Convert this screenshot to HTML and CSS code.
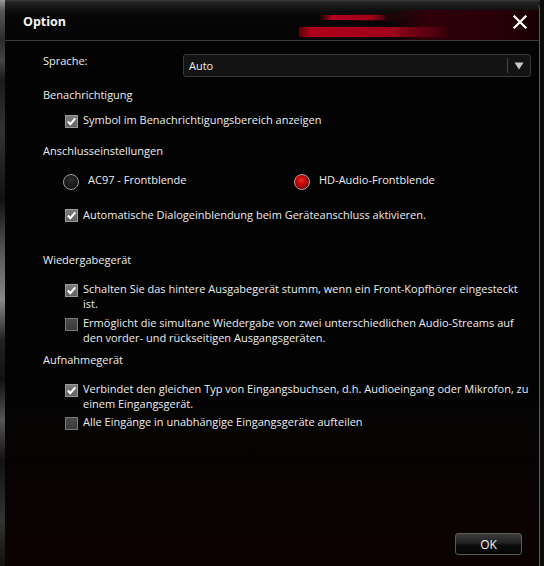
FILE: index.html
```html
<!DOCTYPE html>
<html lang="de">
<head>
<meta charset="utf-8">
<title>Option</title>
<link rel="stylesheet" href="styles.css">
</head>
<body>
<div class="screen">
  <div class="backwin"></div>
  <div class="dialog">
    <div class="titlebar">
      <span class="title">Option</span>
      <span class="close"><svg width="14" height="14" viewBox="0 0 14 14"><path d="M1.5 1.5 L12.5 12.5 M12.5 1.5 L1.5 12.5" stroke="#fff" stroke-width="2.2" stroke-linecap="square"/></svg></span>
    </div>
    <div class="content">
      <div class="row-lang">
        <span class="lang-label">Sprache:</span>
        <div class="select">
          <span class="select-value">Auto</span>
          <span class="select-btn"><svg width="10" height="8" viewBox="0 0 10 8"><path d="M0.5 0.5 H9.5 L5 7.5 Z" fill="#c8c8c8"/></svg></span>
        </div>
      </div>
      <div class="heading h1">Benachrichtigung</div>
      <div class="opt o1"><span class="cb on"><svg width="11" height="11" viewBox="0 0 11 11"><path d="M1.8 5.6 L4.3 8.2 L9.3 2.4" fill="none" stroke="#fff" stroke-width="2.1"/></svg></span><span class="txt">Symbol im Benachrichtigungsbereich anzeigen</span></div>
      <div class="heading h2">Anschlusseinstellungen</div>
      <div class="radios">
        <div class="radio-item first"><span class="rb"></span><span class="txt">AC97 - Frontblende</span></div>
        <div class="radio-item"><span class="rb on"></span><span class="txt">HD-Audio-Frontblende</span></div>
      </div>
      <div class="opt o2"><span class="cb on"><svg width="11" height="11" viewBox="0 0 11 11"><path d="M1.8 5.6 L4.3 8.2 L9.3 2.4" fill="none" stroke="#fff" stroke-width="2.1"/></svg></span><span class="txt">Automatische Dialogeinblendung beim Geräteanschluss aktivieren.</span></div>
      <div class="heading h3">Wiedergabegerät</div>
      <div class="opt o3"><span class="cb on"><svg width="11" height="11" viewBox="0 0 11 11"><path d="M1.8 5.6 L4.3 8.2 L9.3 2.4" fill="none" stroke="#fff" stroke-width="2.1"/></svg></span><span class="txt">Schalten Sie das hintere Ausgabegerät stumm, wenn ein Front-Kopfhörer eingesteckt<br>ist.</span></div>
      <div class="opt o4"><span class="cb"></span><span class="txt">Ermöglicht die simultane Wiedergabe von zwei unterschiedlichen Audio-Streams auf<br>den vorder- und rückseitigen Ausgangsgeräten.</span></div>
      <div class="heading h4">Aufnahmegerät</div>
      <div class="opt o5"><span class="cb on"><svg width="11" height="11" viewBox="0 0 11 11"><path d="M1.8 5.6 L4.3 8.2 L9.3 2.4" fill="none" stroke="#fff" stroke-width="2.1"/></svg></span><span class="txt">Verbindet den gleichen Typ von Eingangsbuchsen, d.h. Audioeingang oder Mikrofon, zu<br>einem Eingangsgerät.</span></div>
      <div class="opt o6"><span class="cb"></span><span class="txt">Alle Eingänge in unabhängige Eingangsgeräte aufteilen</span></div>
    </div>
    <div class="footer">
      <button class="ok">OK</button>
    </div>
  </div>
  <div class="rightedge"></div>
</div>
</body>
</html>
```
FILE: styles.css
```css
html, body {
  margin: 0;
  padding: 0;
}
body {
  width: 544px;
  height: 566px;
  overflow: hidden;
  background: #1c1c1c;
  font-family: "Open Sans", "Noto Sans", sans-serif;
  font-size: 11px;
  color: #ececec;
}
.screen {
  display: flex;
  height: 566px;
  background: linear-gradient(180deg, #3a3a3a 0, #1a1a1a 3px, #111 100%);
}
.backwin {
  width: 5px;
  flex: none;
  background: linear-gradient(180deg, #9a9a9a 0, #5a5a5a 10px, #2a2a2a 40px, #444 60px, #1a1a1a 80px, #333 130px, #111 200px, #555 250px, #888 300px, #222 340px, #111 380px, #555 420px, #111 460px, #333 520px, #111 566px);
}
.dialog {
  width: 534px;
  flex: none;
  margin-top: 3px;
  height: 563px;
  border-right: 1px solid #5c5c5c;
  border-top-right-radius: 6px;
  background: linear-gradient(180deg, #030303 0%, #040303 70%, #0d0202 100%);
  display: flex;
  flex-direction: column;
}
.rightedge {
  flex: 1;
  background: #0b0b0b;
}
.titlebar {
  height: 37px;
  flex: none;
  border-bottom: 1px solid #3a3a3a;
  border-top-right-radius: 6px;
  display: flex;
  align-items: center;
  justify-content: space-between;
  padding: 0 12px 0 18px;
  background:
    linear-gradient(90deg, rgba(170,0,26,0), #b0001c 20%, #a00019 80%, rgba(140,0,22,0.3)) 314px 12px / 66px 5px no-repeat,
    linear-gradient(90deg, rgba(90,0,16,0), #3c000a 30%, rgba(70,0,12,0)) 336px 11px / 70px 7px no-repeat,
    linear-gradient(90deg, #5a000c, #b0001c 8%, #a00019 60%, rgba(130,0,20,0)) 294px 24px / 152px 10px no-repeat,
    linear-gradient(90deg, rgba(60,0,10,0), #300009 25%, #280008 75%, #160004) 380px 7px / 154px 30px no-repeat,
    linear-gradient(180deg, #232323 0, #121212 6px, #060606 14px, #040404 100%);
}
.title {
  font-weight: 700;
  font-size: 12.5px;
  color: #f4f4f4;
}
.close {
  display: flex;
  width: 14px;
  height: 14px;
}
.content {
  flex: 1;
  display: flex;
  flex-direction: column;
  padding: 13px 0 0 38px;
}
.row-lang {
  display: flex;
  height: 23px;
}
.lang-label {
  width: 140px;
  line-height: 14px;
}
.select {
  width: 348px;
  height: 23px;
  box-sizing: border-box;
  border: 1px solid #383838;
  border-radius: 3px;
  background: #131313;
  display: flex;
  align-items: center;
  padding-left: 5px;
}
.select-value {
  flex: 1;
}
.select-btn {
  width: 21px;
  height: 15px;
  border-left: 1px solid #444;
  display: flex;
  align-items: center;
  justify-content: center;
  margin-right: 1px;
}
.heading {
  line-height: 16px;
}
.h1 { margin-top: 10px; }
.h2 { margin-top: 15px; }
.h3 { margin-top: 30px; }
.h4 { margin-top: 7px; }
.opt {
  display: flex;
  align-items: flex-start;
  padding-left: 22px;
  line-height: 15px;
  white-space: nowrap;
}
.o1 { margin-top: 9px; }
.o2 { margin-top: 17px; }
.o3 { margin-top: 13px; }
.o4 { margin-top: 4px; }
.o5 { margin-top: 13px; }
.o6 { margin-top: 3px; }
.cb {
  width: 13px;
  height: 13px;
  box-sizing: border-box;
  margin-top: 2.5px;
  margin-right: 5px;
  flex: none;
  border: 1px solid #7a7a7a;
  background: linear-gradient(180deg, #4a4a4a, #3a3a3a);
  display: flex;
  align-items: center;
  justify-content: center;
}
.cb.on {
  border-color: #9a9a9a;
  background: linear-gradient(180deg, #7c7c7c, #606060);
}
.radios {
  display: flex;
  margin-top: 13px;
  padding-left: 20px;
  line-height: 16px;
}
.radio-item {
  display: flex;
  align-items: flex-start;
}
.radio-item.first {
  width: 231px;
}
.rb {
  width: 16px;
  height: 16px;
  box-sizing: border-box;
  margin-top: 2px;
  margin-right: 9px;
  border-radius: 50%;
  border: 1.5px solid #9c9c9c;
  background: radial-gradient(circle at 50% 35%, #2e2e2e, #141414 70%);
  flex: none;
}
.rb.on {
  border-color: #a8a8a8;
  background: radial-gradient(circle at 45% 38%, #e82a2a 0, #bf0505 40%, #7a0000 80%, #4a0000 100%);
}
.footer {
  display: flex;
  justify-content: flex-end;
  padding: 0 17px 11px 0;
}
.ok {
  width: 67px;
  height: 22px;
  box-sizing: border-box;
  border: 1px solid #5a5a5a;
  border-radius: 3px;
  background: linear-gradient(180deg, #3c3c3c 0%, #222 45%, #0c0c0c 55%, #050505 100%);
  color: #f2f2f2;
  font-family: "Open Sans", "Noto Sans", sans-serif;
  font-size: 12px;
  padding: 0;
}
```
